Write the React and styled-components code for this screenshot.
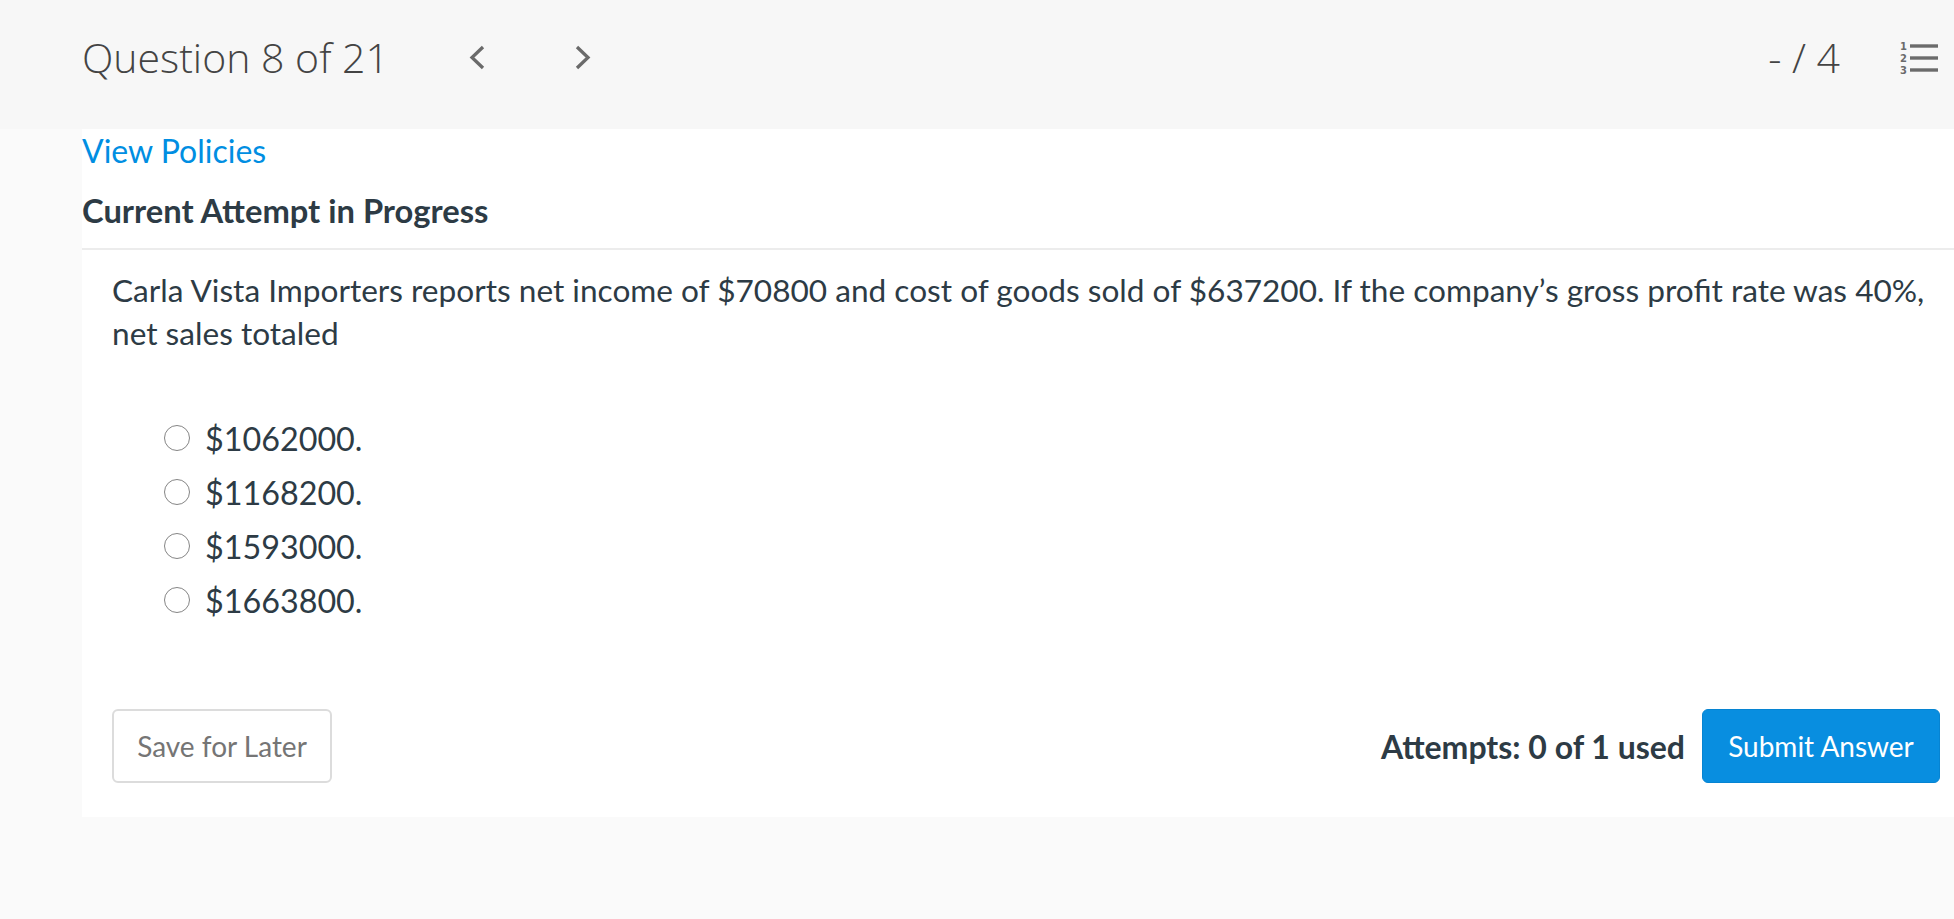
import React from "react";
import styled, { createGlobalStyle } from "styled-components";

const GlobalStyle = createGlobalStyle`
  html, body {
    margin: 0;
    padding: 0;
    background: #fafafa;
  }
  body {
    font-family: Lato, "Noto Sans", sans-serif;
    color: #2d3b45;
  }
`;

const Page = styled.div`
  min-height: 919px;
  background: #fafafa;
`;

const Header = styled.header`
  height: 129px;
  box-sizing: border-box;
  background: #f7f7f7;
  display: flex;
  align-items: flex-start;
  padding: 37px 14px 0 82px;
`;

const Title = styled.h1`
  margin: 0;
  font-family: "Open Sans", sans-serif;
  font-weight: 300;
  font-size: 41px;
  line-height: 40px;
  color: #444;
  white-space: nowrap;
`;

const NavButton = styled.button`
  display: flex;
  width: 17px;
  height: 26px;
  margin: 8px 0 0 ${(p) => p.$gap}px;
  padding: 0;
  border: 0;
  background: none;
  cursor: pointer;
`;

const Spacer = styled.div`
  flex: 1;
`;

const Score = styled(Title).attrs({ as: "div" })``;

const ListIcon = styled.svg`
  margin: 3px 0 0 58px;
  flex: none;
`;

const Panel = styled.main`
  margin-left: 82px;
  background: #fff;
  padding: 4px 0 34px;
`;

const PolicyLink = styled.a`
  display: block;
  width: max-content;
  font-size: 32px;
  line-height: 36px;
  color: #008ee2;
  text-decoration: none;
`;

const AttemptHeading = styled.h2`
  margin: 24px 0 0;
  font-size: 32.7px;
  line-height: 36px;
  font-weight: 700;
  color: #2d3b45;
`;

const Divider = styled.div`
  height: 2px;
  margin-top: 19px;
  background: #ececec;
`;

const QuestionBody = styled.section`
  padding-left: 30px;
`;

const Prompt = styled.p`
  margin: 19px 0 0;
  font-size: 31.6px;
  line-height: 43px;
  color: #2d3b45;
`;

const OptionList = styled.div`
  margin-top: 56px;
  padding-left: 52px;
  display: flex;
  flex-direction: column;
`;

const Option = styled.label`
  display: flex;
  align-items: center;
  gap: 15px;
  height: 54px;
  font-size: 32.3px;
  color: #2d3b45;
  cursor: pointer;
`;

const Radio = styled.input`
  appearance: none;
  width: 26px;
  height: 26px;
  margin: 0;
  border: 1.5px solid #858585;
  border-radius: 50%;
  background: #fff;
  box-sizing: border-box;
`;

const Footer = styled.div`
  margin-top: 82px;
  padding-right: 14px;
  display: flex;
  align-items: center;
  justify-content: space-between;
`;

const SaveButton = styled.button`
  width: 220px;
  height: 74px;
  border: 2px solid #dcdcdc;
  border-radius: 6px;
  background: #fff;
  color: #757575;
  font-family: Lato, sans-serif;
  font-size: 28px;
  cursor: pointer;
`;

const SubmitGroup = styled.div`
  display: flex;
  align-items: center;
  gap: 17px;
`;

const Attempts = styled.span`
  font-size: 32px;
  font-weight: 700;
  color: #2d3b45;
`;

const SubmitButton = styled.button`
  width: 238px;
  height: 74px;
  border: 1px solid #0684d2;
  border-radius: 6px;
  background: #088ee0;
  color: #fff;
  font-family: Lato, sans-serif;
  font-size: 28px;
  cursor: pointer;
`;

const options = ["$1062000.", "$1168200.", "$1593000.", "$1663800."];

function Chevron({ dir }) {
  const pts = dir === "left" ? "14,2 3,12.5 14,23" : "3,2 14,12.5 3,23";
  return (
    <svg width="17" height="26" viewBox="0 0 17 26">
      <polyline points={pts} fill="none" stroke="#6a6a6a" strokeWidth="3.3" />
    </svg>
  );
}

export default function App() {
  return (
    <Page>
      <GlobalStyle />
      <Header>
        <Title>Question 8 of 21</Title>
        <NavButton $gap={80} aria-label="Previous">
          <Chevron dir="left" />
        </NavButton>
        <NavButton $gap={88} aria-label="Next">
          <Chevron dir="right" />
        </NavButton>
        <Spacer />
        <Score>- / 4</Score>
        <ListIcon width="42" height="36" viewBox="0 0 42 36">
          <g fill="#6b6b6b">
            <rect x="12" y="4.3" width="28" height="3.4" />
            <rect x="12" y="16.3" width="28" height="3.4" />
            <rect x="12" y="28.3" width="28" height="3.4" />
          </g>
          <g fill="#6b6b6b" fontFamily="'DejaVu Sans', sans-serif" fontWeight="700" fontSize="10">
            <text x="2" y="9.8">1</text>
            <text x="2" y="21.8">2</text>
            <text x="2" y="33.8">3</text>
          </g>
        </ListIcon>
      </Header>

      <Panel>
        <PolicyLink href="#">View Policies</PolicyLink>
        <AttemptHeading>Current Attempt in Progress</AttemptHeading>
        <Divider />
        <QuestionBody>
          <Prompt>
            Carla Vista Importers reports net income of $70800 and cost of goods sold of $637200. If the
            company’s gross profit rate was 40%, net sales totaled
          </Prompt>
          <OptionList>
            {options.map((o) => (
              <Option key={o}>
                <Radio type="radio" name="answer" />
                {o}
              </Option>
            ))}
          </OptionList>
          <Footer>
            <SaveButton>Save for Later</SaveButton>
            <SubmitGroup>
              <Attempts>Attempts: 0 of 1 used</Attempts>
              <SubmitButton>Submit Answer</SubmitButton>
            </SubmitGroup>
          </Footer>
        </QuestionBody>
      </Panel>
    </Page>
  );
}
